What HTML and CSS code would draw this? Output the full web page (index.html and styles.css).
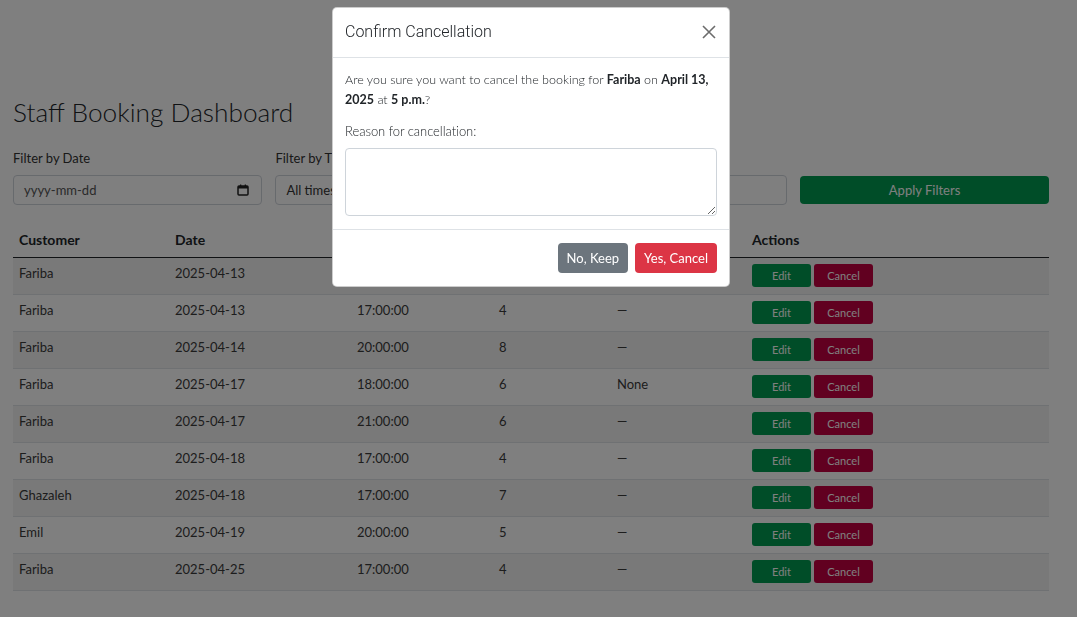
FILE: index.html
```html
<!DOCTYPE html>
<html lang="en">
<head>
<meta charset="utf-8">
<title>Staff Booking Dashboard</title>
<link rel="stylesheet" href="styles.css">
</head>
<body>
<main class="page">
  <h2 class="page-title">Staff Booking Dashboard</h2>
  <form class="filters">
    <div class="field">
      <label class="field-label">Filter by Date</label>
      <div class="control date-control">
        <span class="date-ph">yyyy-mm-dd</span>
        <svg class="cal" width="12" height="12" viewBox="0 0 12 12"><rect x="1" y="2" width="10" height="9" rx="1" fill="none" stroke="#222" stroke-width="1.5"/><rect x="1" y="2" width="10" height="2.5" fill="#222"/><rect x="3" y="0.5" width="1.3" height="2.5" fill="#222"/><rect x="7.7" y="0.5" width="1.3" height="2.5" fill="#222"/></svg>
      </div>
    </div>
    <div class="field">
      <label class="field-label">Filter by Time</label>
      <select class="control select-control">
        <option>All times</option>
      </select>
    </div>
    <div class="field">
      <label class="field-label">Filter by Customer</label>
      <input class="control" type="text">
    </div>
    <div class="field field-end">
      <button class="btn-apply" type="button">Apply Filters</button>
    </div>
  </form>

  <table class="bookings">
    <colgroup>
      <col class="c-customer"><col class="c-date"><col class="c-time"><col class="c-guests"><col class="c-notes"><col class="c-actions">
    </colgroup>
    <thead>
      <tr><th>Customer</th><th>Date</th><th>Time</th><th>Guests</th><th>Notes</th><th>Actions</th></tr>
    </thead>
    <tbody>
      <tr><td>Fariba</td><td>2025-04-13</td><td>17:00:00</td><td>4</td><td>—</td><td class="act-cell"><span class="act"><button class="btn-sm edit">Edit</button><button class="btn-sm cancel">Cancel</button></span></td></tr>
      <tr><td>Fariba</td><td>2025-04-13</td><td>17:00:00</td><td>4</td><td>—</td><td class="act-cell"><span class="act"><button class="btn-sm edit">Edit</button><button class="btn-sm cancel">Cancel</button></span></td></tr>
      <tr><td>Fariba</td><td>2025-04-14</td><td>20:00:00</td><td>8</td><td>—</td><td class="act-cell"><span class="act"><button class="btn-sm edit">Edit</button><button class="btn-sm cancel">Cancel</button></span></td></tr>
      <tr><td>Fariba</td><td>2025-04-17</td><td>18:00:00</td><td>6</td><td>None</td><td class="act-cell"><span class="act"><button class="btn-sm edit">Edit</button><button class="btn-sm cancel">Cancel</button></span></td></tr>
      <tr><td>Fariba</td><td>2025-04-17</td><td>21:00:00</td><td>6</td><td>—</td><td class="act-cell"><span class="act"><button class="btn-sm edit">Edit</button><button class="btn-sm cancel">Cancel</button></span></td></tr>
      <tr><td>Fariba</td><td>2025-04-18</td><td>17:00:00</td><td>4</td><td>—</td><td class="act-cell"><span class="act"><button class="btn-sm edit">Edit</button><button class="btn-sm cancel">Cancel</button></span></td></tr>
      <tr><td>Ghazaleh</td><td>2025-04-18</td><td>17:00:00</td><td>7</td><td>—</td><td class="act-cell"><span class="act"><button class="btn-sm edit">Edit</button><button class="btn-sm cancel">Cancel</button></span></td></tr>
      <tr><td>Emil</td><td>2025-04-19</td><td>20:00:00</td><td>5</td><td>—</td><td class="act-cell"><span class="act"><button class="btn-sm edit">Edit</button><button class="btn-sm cancel">Cancel</button></span></td></tr>
      <tr><td>Fariba</td><td>2025-04-25</td><td>17:00:00</td><td>4</td><td>—</td><td class="act-cell"><span class="act"><button class="btn-sm edit">Edit</button><button class="btn-sm cancel">Cancel</button></span></td></tr>
    </tbody>
  </table>
</main>

<div class="backdrop"></div>
<div class="modal-wrap">
  <div class="modal">
    <div class="modal-header">
      <h5 class="modal-title">Confirm Cancellation</h5>
      <button class="close" type="button" aria-label="Close">
        <svg width="14" height="14" viewBox="0 0 14 14"><path d="M1 1L13 13M13 1L1 13" stroke="#6c6c6c" stroke-width="1.6" fill="none"/></svg>
      </button>
    </div>
    <div class="modal-body">
      <p class="question">Are you sure you want to cancel the booking for <strong>Fariba</strong> on <strong>April 13, 2025</strong> at <strong>5 p.m.</strong>?</p>
      <label class="reason-label">Reason for cancellation:</label>
      <textarea class="reason"></textarea>
    </div>
    <div class="modal-footer">
      <button class="btn-modal keep" type="button">No, Keep</button>
      <button class="btn-modal yes" type="button">Yes, Cancel</button>
    </div>
  </div>
</div>
</body>
</html>
```
FILE: styles.css
```css
* { box-sizing: border-box; }
html, body { margin: 0; padding: 0; }
body {
  font-family: "Lato", "Liberation Sans", sans-serif;
  font-size: 13px;
  font-weight: 400;
  color: #333;
  background: #fff;
  padding-right: 15px;
}
.page {
  margin: 0 13px;
  padding-top: 95px;
}
.page-title {
  font-family: "Lato", "Roboto", sans-serif;
  font-weight: 300;
  font-size: 26.25px;
  line-height: 35px;
  margin: 0;
  color: #212529;
}
.filters {
  display: grid;
  grid-template-columns: repeat(4, 1fr);
  column-gap: 13.5px;
  margin-top: 18px;
}
.field { display: flex; flex-direction: column; }
.field-end { justify-content: flex-end; }
.field-label {
  line-height: 20px;
  margin-bottom: 7px;
  font-size: 13px;
}
.control {
  height: 30px;
  border: 1px solid #ced4da;
  border-radius: 4px;
  padding: 0 10px;
  font-family: "Lato", sans-serif;
  font-size: 13px;
  font-weight: 400;
  color: #333;
  background: #fff;
}
.date-control {
  display: flex;
  align-items: center;
  justify-content: space-between;
  padding: 0 12px 0 10px;
}
.date-ph { color: #555; }
.select-control { padding: 0 6px; }
.btn-apply {
  height: 28px;
  margin-bottom: 1px;
  border: none;
  border-radius: 4px;
  background: #009a50;
  color: #fff;
  font-family: "Lato", sans-serif;
  font-weight: 400;
  font-size: 13px;
}
.bookings {
  width: 100%;
  border-collapse: collapse;
  margin-top: 18px;
  table-layout: fixed;
}
.c-customer { width: 156px; }
.c-date { width: 182px; }
.c-time { width: 142px; }
.c-guests { width: 118px; }
.c-notes { width: 135px; }
.bookings th {
  text-align: left;
  font-weight: 700;
  font-size: 14px;
  color: #212529;
  padding: 0 6px;
  height: 34px;
  border-bottom: 1px solid #212529;
}
.bookings td {
  padding: 5px 6px 0 6px;
  height: 37px;
  line-height: 20px;
  vertical-align: top;
  border-bottom: 1px solid #dee2e6;
  color: #3a3a3a;
}
.bookings td.act-cell { padding-top: 6px; }
.bookings tbody tr:nth-child(odd) td { background: #f2f2f2; }
.act { display: flex; gap: 3px; }
.btn-sm {
  width: 59px;
  height: 23px;
  border: none;
  border-radius: 3px;
  color: #fff;
  font-family: "Lato", sans-serif;
  font-weight: 400;
  font-size: 11px;
  padding: 0;
}
.edit { background: #009a50; }
.cancel { background: #c20040; }

.backdrop {
  position: fixed;
  inset: 0;
  background: rgba(0, 0, 0, 0.5);
}
.modal-wrap {
  position: fixed;
  inset: 0;
  padding-right: 15px;
  display: flex;
  justify-content: center;
  align-items: flex-start;
}
.modal {
  margin-top: 7px;
  width: 398px;
  background: #fff;
  border: 1px solid rgba(0,0,0,0.2);
  border-radius: 5px;
}
.modal-header {
  display: flex;
  align-items: center;
  justify-content: space-between;
  padding: 11px 12px 12px 12px;
  border-bottom: 1px solid #dee2e6;
}
.modal-title {
  margin: 0;
  font-family: "Roboto", "Lato", sans-serif;
  font-weight: 300;
  font-size: 16px;
  line-height: 26px;
  color: #212529;
}
.close {
  border: none;
  background: none;
  padding: 0;
  width: 16px;
  height: 16px;
  display: flex;
  align-items: center;
  justify-content: center;
}
.modal-body {
  padding: 12px 12px 13px 12px;
  font-weight: 300;
  color: #212529;
}
.question {
  margin: 0 0 11px 0;
  line-height: 20px;
  font-size: 12.5px;
  letter-spacing: 0;
}
.question strong { font-weight: 700; }
.reason-label {
  display: block;
  line-height: 20px;
  margin-bottom: 7px;
  letter-spacing: -0.05px;
}
.reason {
  display: block;
  width: 100%;
  height: 68px;
  border: 1px solid #ced4da;
  border-radius: 4px;
  resize: vertical;
}
.modal-footer {
  display: flex;
  justify-content: flex-end;
  gap: 7px;
  padding: 13px 12px 13px 12px;
  border-top: 1px solid #dee2e6;
}
.btn-modal {
  height: 30px;
  border: none;
  border-radius: 4px;
  color: #fff;
  font-family: "Lato", sans-serif;
  font-weight: 400;
  font-size: 13px;
  padding: 0 9px;
  white-space: nowrap;
}
.keep { background: #6c757d; }
.yes { background: #dc3545; }
```
